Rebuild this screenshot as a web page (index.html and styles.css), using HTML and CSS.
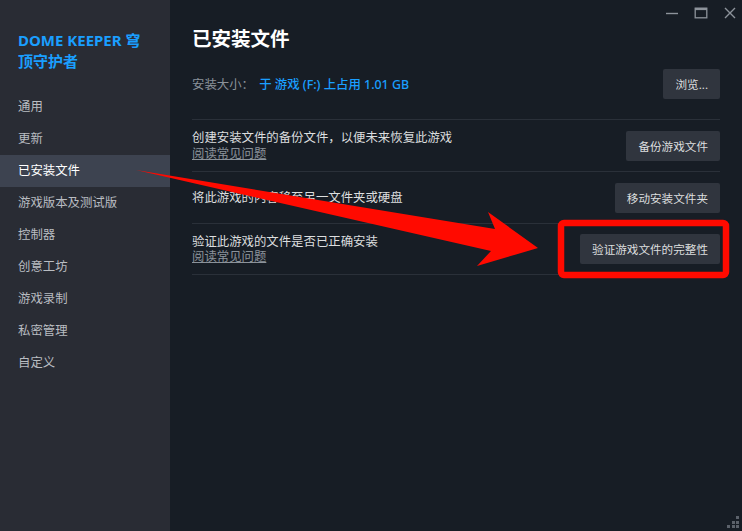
FILE: index.html
```html
<!DOCTYPE html>
<html lang="zh-CN">
<head>
<meta charset="utf-8">
<title>DOME KEEPER 穹顶守护者 - 已安装文件</title>
<link rel="stylesheet" href="styles.css">
</head>
<body>
<div class="window">
  <aside class="sidebar">
    <div class="game-title">DOME KEEPER 穹顶守护者</div>
    <nav class="nav">
      <div class="nav-item">通用</div>
      <div class="nav-item">更新</div>
      <div class="nav-item active">已安装文件</div>
      <div class="nav-item">游戏版本及测试版</div>
      <div class="nav-item">控制器</div>
      <div class="nav-item">创意工坊</div>
      <div class="nav-item">游戏录制</div>
      <div class="nav-item">私密管理</div>
      <div class="nav-item">自定义</div>
    </nav>
  </aside>

  <main class="content">
    <div class="titlebar">
      <svg class="ctl" width="14" height="14" viewBox="0 0 14 14"><path d="M1 7.5h12" stroke="currentColor" stroke-width="1.4"/></svg>
      <svg class="ctl" width="14" height="14" viewBox="0 0 14 14"><rect x="1.2" y="2.2" width="11.6" height="9.6" fill="none" stroke="currentColor" stroke-width="1.3"/><path d="M1 3h12" stroke="currentColor" stroke-width="2.2"/></svg>
      <svg class="ctl" width="14" height="14" viewBox="0 0 14 14"><path d="M2 2l10 10M12 2L2 12" stroke="currentColor" stroke-width="1.4"/></svg>
    </div>

    <h1 class="page-title">已安装文件</h1>

    <div class="size-row">
      <div class="size-info"><span class="size-label">安装大小：</span> <span class="size-value">于 游戏 (F:) 上占用 1.01 GB</span></div>
      <button class="btn">浏览...</button>
    </div>

    <section class="row">
      <div class="row-text">
        <div class="desc">创建安装文件的备份文件，以便未来恢复此游戏</div>
        <a class="faq">阅读常见问题</a>
      </div>
      <button class="btn">备份游戏文件</button>
    </section>

    <section class="row">
      <div class="row-text">
        <div class="desc">将此游戏的内容移至另一文件夹或硬盘</div>
      </div>
      <button class="btn">移动安装文件夹</button>
    </section>

    <section class="row last">
      <div class="row-text">
        <div class="desc">验证此游戏的文件是否已正确安装</div>
        <a class="faq">阅读常见问题</a>
      </div>
      <button class="btn">验证游戏文件的完整性</button>
    </section>

    <div class="grip">
      <i></i><i></i><i></i><i></i><i></i><i></i>
    </div>
  </main>

  <!-- red callout pointing at the verify button -->
  <svg class="callout" width="742" height="531" viewBox="0 0 742 531">
    <polygon points="136,170 495,229 488,212 538,248 477,266 491,251" fill="#ff0a00"/>
    <rect x="561" y="223" width="165" height="52" rx="3" fill="none" stroke="#ff0a00" stroke-width="6.5"/>
  </svg>
</div>
</body>
</html>
```

FILE: styles.css
```css
* { box-sizing: border-box; }

html, body {
  margin: 0;
  padding: 0;
  background: #171d25;
}

body {
  font-family: "Noto Sans", "Noto Sans CJK SC", sans-serif;
  font-size: 12.4px;
  color: #dcdedf;
}

.window {
  position: relative;
  display: flex;
  width: 742px;
  height: 531px;
  overflow: hidden;
}

/* left navigation column */
.sidebar {
  width: 170px;
  flex: none;
  background: #292c34;
  padding-top: 30px;
}

.game-title {
  padding: 0 18px;
  font-size: 15px;
  font-weight: 700;
  line-height: 21px;
  color: #1a9fff;
  margin-bottom: 19px;
}

.nav-item {
  height: 32px;
  line-height: 32px;
  padding-left: 18px;
  color: #b9bdc2;
  white-space: nowrap;
}

.nav-item.active {
  background: #3d4350;
  color: #ffffff;
}

/* right settings panel */
.content {
  position: relative;
  flex: 1;
  padding: 0 22px;
  display: flex;
  flex-direction: column;
}

.titlebar {
  height: 26px;
  margin-right: -17px;
  display: flex;
  justify-content: flex-end;
  align-items: center;
  gap: 15px;
  color: #8d939b;
}

.ctl { display: block; }

.page-title {
  margin: 0;
  font-size: 19.5px;
  line-height: 26px;
  font-weight: 700;
  color: #ffffff;
}

.size-row {
  margin-top: 17px;
  height: 30px;
  display: flex;
  align-items: center;
  justify-content: space-between;
  margin-bottom: 20px;
}

.size-label { color: #8b929a; }
.size-value { color: #1a9fff; padding-left: 2px; font-weight: 500; }

.btn {
  height: 30px;
  padding: 0 12px;
  border: none;
  border-radius: 2px;
  background: #30353e;
  color: #dcdedf;
  font-family: inherit;
  font-size: 11.6px;
  white-space: nowrap;
}

.row {
  height: 52px;
  flex: none;
  border-top: 1px solid #2a3039;
  display: flex;
  align-items: center;
  justify-content: space-between;
}

.row.last { border-bottom: 1px solid #2a3039; }

.row-text {
  line-height: 15.5px;
}

.faq {
  display: block;
  color: #8b929a;
  text-decoration: underline;
}

/* bottom-right resize grip */
.grip {
  position: absolute;
  right: 3px;
  bottom: 3px;
  width: 12px;
  height: 12px;
  display: grid;
  grid-template-columns: repeat(3, 3px);
  grid-template-rows: repeat(3, 3px);
  gap: 1.5px;
}

.grip i { background: #5b616a; }
.grip i:nth-child(1) { grid-area: 1 / 3; }
.grip i:nth-child(2) { grid-area: 2 / 2; }
.grip i:nth-child(3) { grid-area: 2 / 3; }
.grip i:nth-child(4) { grid-area: 3 / 1; }
.grip i:nth-child(5) { grid-area: 3 / 2; }
.grip i:nth-child(6) { grid-area: 3 / 3; }

.callout {
  position: absolute;
  left: 0;
  top: 0;
  pointer-events: none;
}
```
